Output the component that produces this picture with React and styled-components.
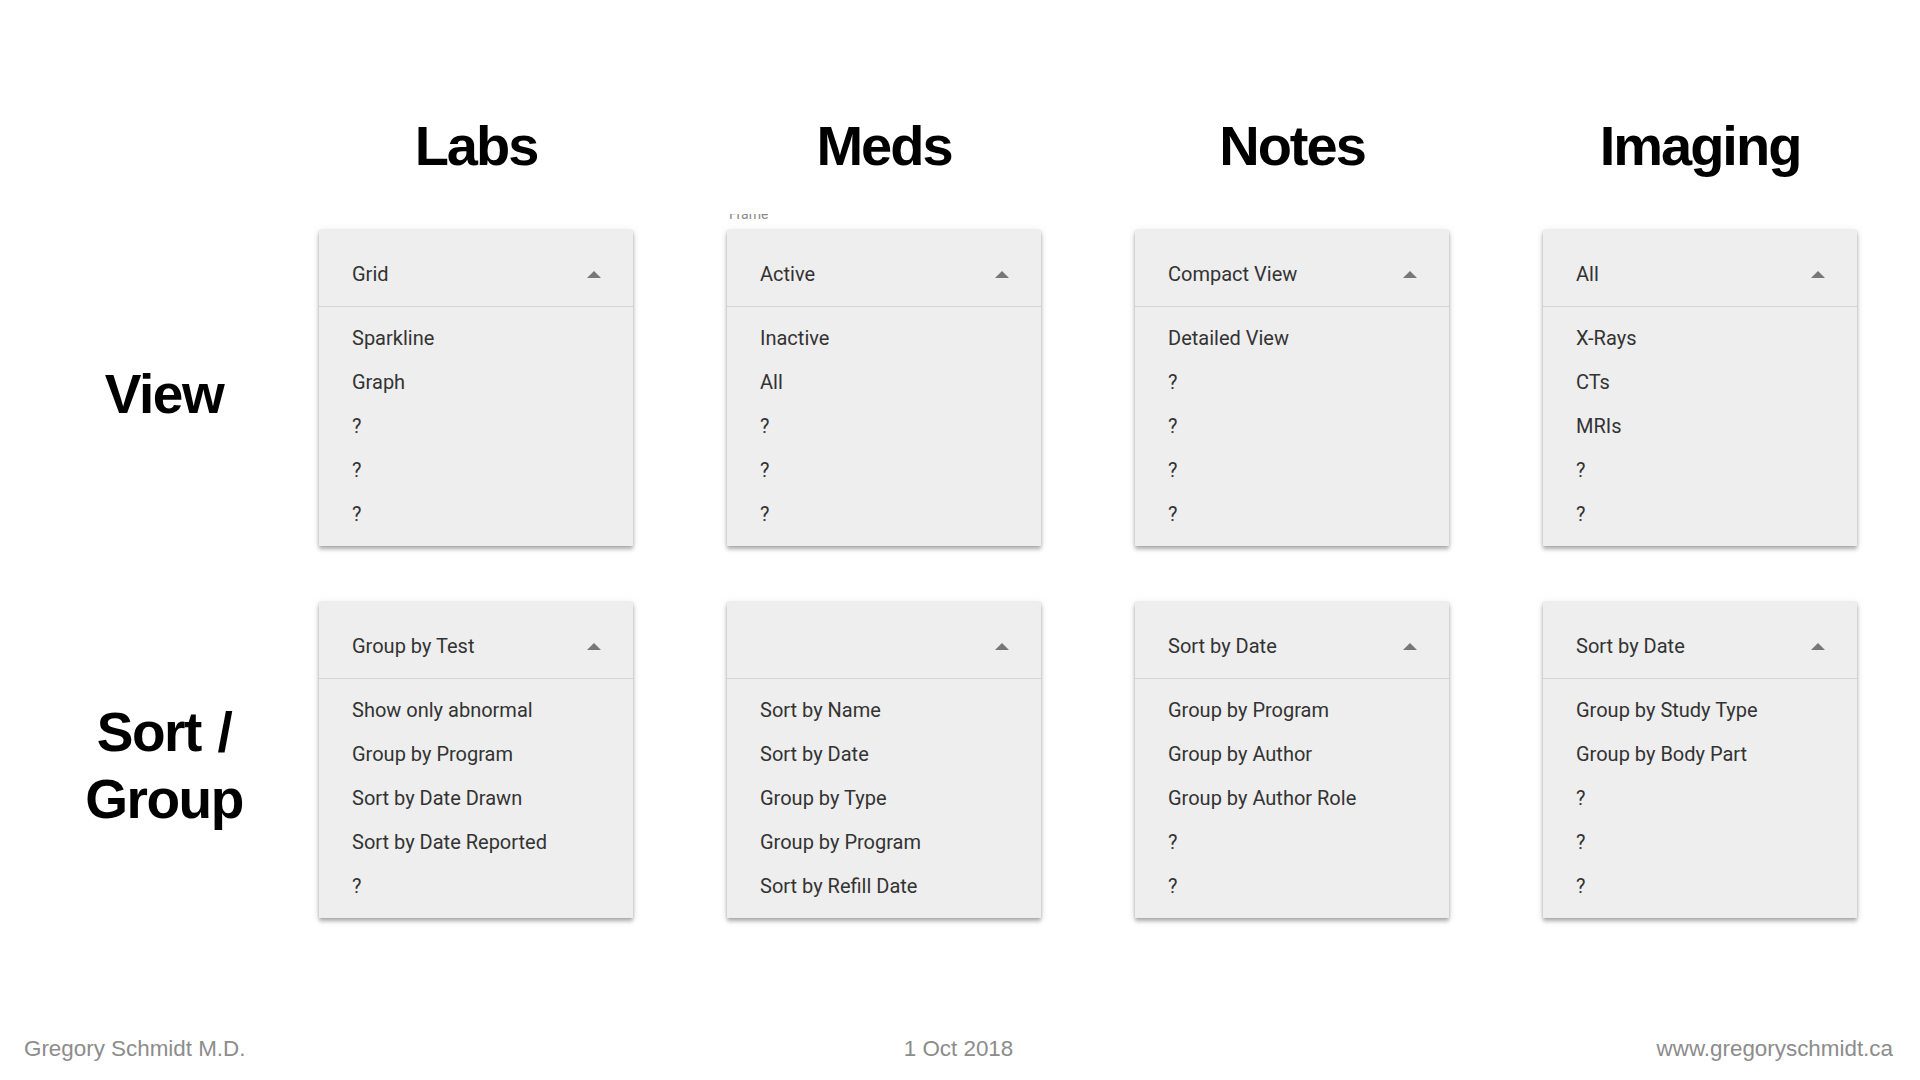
import React from 'react'
import styled, { createGlobalStyle } from 'styled-components'

const Global = createGlobalStyle`
  html, body {
    margin: 0;
    padding: 0;
    background: #ffffff;
  }
  body {
    font-family: "Liberation Sans", Arial, sans-serif;
  }
`

const Page = styled.div`
  width: 1920px;
  height: 1080px;
  display: flex;
  flex-direction: column;
  overflow: hidden;
`

const Board = styled.div`
  display: grid;
  grid-template-columns: 122px repeat(4, 314px);
  grid-template-rows: 56px 316px 316px;
  column-gap: 94px;
  row-gap: 56px;
  padding: 118px 0 0 103px;
`

const ColumnTitle = styled.h1`
  margin: 0;
  font-size: 56px;
  line-height: 56px;
  font-weight: 700;
  letter-spacing: -2px;
  color: #000;
  text-align: center;
  align-self: start;
  grid-row: 1;
`

const RowLabel = styled.div`
  display: flex;
  flex-direction: column;
  align-items: center;
  justify-content: center;
  padding-top: ${p => p.$shift || 0}px;
  font-size: 55px;
  line-height: 67px;
  font-weight: 700;
  letter-spacing: -1.5px;
  word-spacing: 3px;
  color: #000;
  white-space: nowrap;
  text-align: center;
`

const Spacer = styled.div`
  grid-row: 1;
`

const CardSlot = styled.div`
  position: relative;
`

const FrameTag = styled.div`
  position: absolute;
  left: 2px;
  top: -16px;
  height: 6px;
  overflow: hidden;
  font-family: Roboto, "Noto Sans", sans-serif;
  font-size: 14px;
  line-height: 14px;
  color: #8a8a8a;
  & > span {
    display: block;
    margin-top: -7px;
  }
`

const Menu = styled.div`
  height: 316px;
  background: #eeeeee;
  box-shadow: 0 3px 4px rgba(0, 0, 0, 0.3), 0 1px 10px rgba(0, 0, 0, 0.07),
    0 0 2px rgba(0, 0, 0, 0.1);
  font-family: Roboto, "Noto Sans", sans-serif;
  color: #333333;
  display: flex;
  flex-direction: column;
`

const MenuHead = styled.div`
  height: 77px;
  box-sizing: border-box;
  padding: 12px 32px 0 33px;
  border-bottom: 1px solid #d4d4d4;
  display: flex;
  align-items: center;
  justify-content: space-between;
  font-size: 20px;
`

const Caret = styled.span`
  width: 0;
  height: 0;
  border-left: 7px solid transparent;
  border-right: 7px solid transparent;
  border-bottom: 7px solid #777777;
  margin-top: 0;
`

const MenuList = styled.ul`
  list-style: none;
  margin: 0;
  padding: 9px 0;
`

const MenuItem = styled.li`
  height: 44px;
  line-height: 44px;
  padding-left: 33px;
  font-size: 20px;
  white-space: nowrap;
`

const Footer = styled.footer`
  margin-top: auto;
  display: grid;
  grid-template-columns: 1fr auto 1fr;
  padding: 0 27px 18px 24px;
  font-size: 22.4px;
  line-height: 26px;
  color: #8c8c8c;
`

const FootRight = styled.span`
  text-align: right;
`

const columns = [
  {
    title: 'Labs',
    view: { selected: 'Grid', items: ['Sparkline', 'Graph', '?', '?', '?'] },
    sort: {
      selected: 'Group by Test',
      items: ['Show only abnormal', 'Group by Program', 'Sort by Date Drawn', 'Sort by Date Reported', '?'],
    },
  },
  {
    title: 'Meds',
    frame: true,
    view: { selected: 'Active', items: ['Inactive', 'All', '?', '?', '?'] },
    sort: {
      selected: '',
      items: ['Sort by Name', 'Sort by Date', 'Group by Type', 'Group by Program', 'Sort by Refill Date'],
    },
  },
  {
    title: 'Notes',
    view: { selected: 'Compact View', items: ['Detailed View', '?', '?', '?', '?'] },
    sort: {
      selected: 'Sort by Date',
      items: ['Group by Program', 'Group by Author', 'Group by Author Role', '?', '?'],
    },
  },
  {
    title: 'Imaging',
    view: { selected: 'All', items: ['X-Rays', 'CTs', 'MRIs', '?', '?'] },
    sort: {
      selected: 'Sort by Date',
      items: ['Group by Study Type', 'Group by Body Part', '?', '?', '?'],
    },
  },
]

function DropMenu({ selected, items }) {
  return (
    <Menu>
      <MenuHead>
        <span>{selected}</span>
        <Caret />
      </MenuHead>
      <MenuList>
        {items.map((it, i) => (
          <MenuItem key={i}>{it}</MenuItem>
        ))}
      </MenuList>
    </Menu>
  )
}

export default function App() {
  return (
    <Page>
      <Global />
      <Board>
        <Spacer />
        {columns.map(c => (
          <ColumnTitle key={c.title}>{c.title}</ColumnTitle>
        ))}

        <RowLabel $shift={12}>View</RowLabel>
        {columns.map(c => (
          <CardSlot key={c.title + '-view'}>
            {c.frame && (
              <FrameTag>
                <span>Frame</span>
              </FrameTag>
            )}
            <DropMenu {...c.view} />
          </CardSlot>
        ))}

        <RowLabel $shift={12}>
          <span>Sort /</span>
          <span>Group</span>
        </RowLabel>
        {columns.map(c => (
          <CardSlot key={c.title + '-sort'}>
            <DropMenu {...c.sort} />
          </CardSlot>
        ))}
      </Board>
      <Footer>
        <span>Gregory Schmidt M.D.</span>
        <span>1 Oct 2018</span>
        <FootRight>www.gregoryschmidt.ca</FootRight>
      </Footer>
    </Page>
  )
}
